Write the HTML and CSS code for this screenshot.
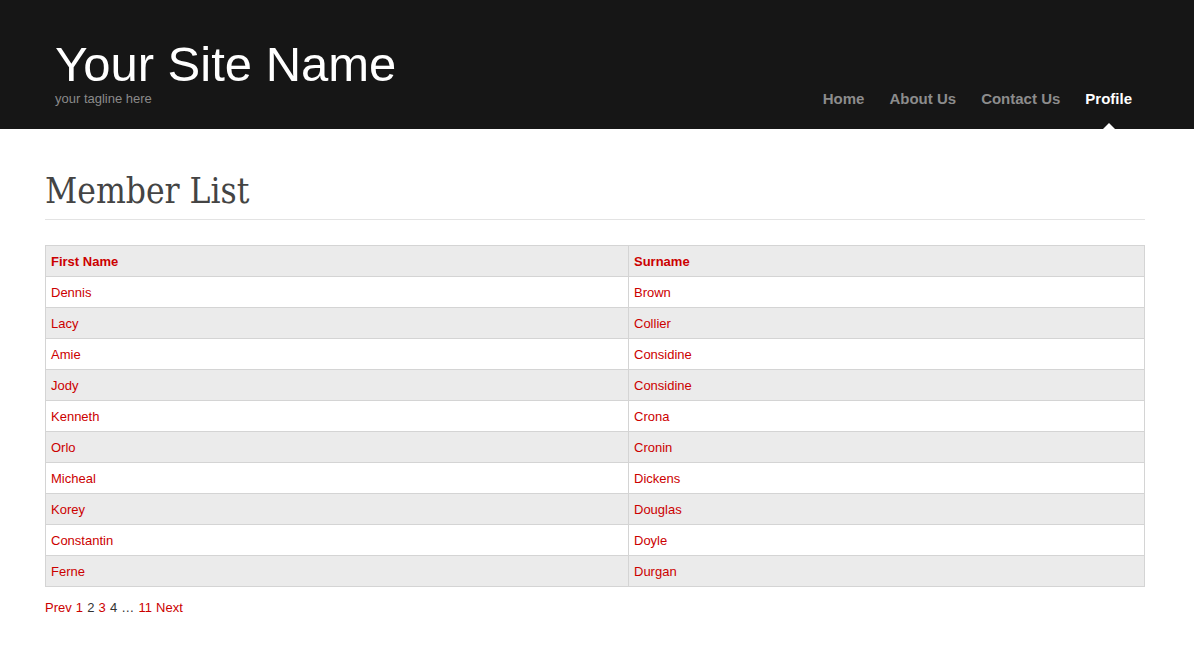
FILE: index.html
```html
<!DOCTYPE html>
<html lang="en">
<head>
<meta charset="utf-8">
<title>Member List</title>
<link rel="stylesheet" href="styles.css">
</head>
<body>
<header class="site-header">
  <div class="header-inner">
    <div class="brand">
      <div class="site-name">Your Site Name</div>
      <div class="tagline">your tagline here</div>
    </div>
    <nav class="main-nav">
      <a href="#" class="nav-link">Home</a>
      <a href="#" class="nav-link">About Us</a>
      <a href="#" class="nav-link">Contact Us</a>
      <a href="#" class="nav-link active">Profile</a>
    </nav>
  </div>
</header>
<main class="content">
  <h1 class="page-title">Member List</h1>
  <table class="members">
    <thead>
      <tr><th class="col-first">First Name</th><th>Surname</th></tr>
    </thead>
    <tbody>
      <tr><td>Dennis</td><td>Brown</td></tr>
      <tr><td>Lacy</td><td>Collier</td></tr>
      <tr><td>Amie</td><td>Considine</td></tr>
      <tr><td>Jody</td><td>Considine</td></tr>
      <tr><td>Kenneth</td><td>Crona</td></tr>
      <tr><td>Orlo</td><td>Cronin</td></tr>
      <tr><td>Micheal</td><td>Dickens</td></tr>
      <tr><td>Korey</td><td>Douglas</td></tr>
      <tr><td>Constantin</td><td>Doyle</td></tr>
      <tr><td>Ferne</td><td>Durgan</td></tr>
    </tbody>
  </table>
  <div class="pager">
    <a href="#" class="pg">Prev</a> <a href="#" class="pg">1</a> <span class="pg-current">2</span> <a href="#" class="pg">3</a> <span class="pg-plain">4</span> <span class="pg-plain">…</span> <a href="#" class="pg">11</a> <a href="#" class="pg">Next</a>
  </div>
</main>
</body>
</html>
```

FILE: styles.css
```css
html, body {
  margin: 0;
  padding: 0;
  background: #ffffff;
  font-family: "Liberation Sans", Arial, sans-serif;
}

.site-header {
  background: #161616;
  height: 129px;
}

.header-inner {
  margin-left: 45px;
  width: 1100px;
  height: 129px;
  display: flex;
  justify-content: space-between;
  align-items: flex-end;
}

.brand {
  padding-left: 10px;
  align-self: flex-start;
  padding-top: 40px;
}

.site-name {
  color: #ffffff;
  font-size: 49px;
  line-height: 48px;
}

.tagline {
  color: #8a8a8a;
  font-size: 13px;
  line-height: 21px;
}

.main-nav {
  display: flex;
}

.nav-link {
  position: relative;
  color: #8c8c8c;
  font-size: 15px;
  font-weight: bold;
  line-height: 20px;
  padding: 0 12px 20px 13px;
  text-decoration: none;
}

.nav-link:last-child {
  padding-right: 13px;
}

.nav-link.active {
  color: #ffffff;
}

.nav-link.active::after {
  content: "";
  position: absolute;
  left: 50%;
  bottom: 0;
  margin-left: -6px;
  border-left: 6px solid transparent;
  border-right: 6px solid transparent;
  border-bottom: 6px solid #ffffff;
}

.content {
  margin-left: 45px;
  width: 1100px;
  padding-top: 40px;
}

.page-title {
  margin: 0;
  font-family: "DejaVu Serif Condensed", "DejaVu Serif", serif;
  font-stretch: condensed;
  font-weight: normal;
  font-size: 35px;
  line-height: 44px;
  color: #444444;
  padding-bottom: 6px;
  border-bottom: 1px solid #e3e3e3;
}

.members {
  margin-top: 25px;
  width: 1100px;
  border-collapse: collapse;
  font-size: 13px;
  line-height: 18px;
}

.members th,
.members td {
  border: 1px solid #d4d4d4;
  padding: 7px 5px 5px;
  text-align: left;
  color: #cc0000;
}

.members th {
  font-weight: bold;
  background: #ebebeb;
}

.members .col-first {
  width: 572px;
}

.members tbody tr:nth-child(even) td {
  background: #ebebeb;
}

.pager {
  margin-top: 12px;
  font-size: 13px;
  line-height: 18px;
  word-spacing: 0.5px;
  color: #333333;
}

.pg {
  color: #cc0000;
  text-decoration: none;
}

.pg-current,
.pg-plain {
  color: #333333;
}
```
